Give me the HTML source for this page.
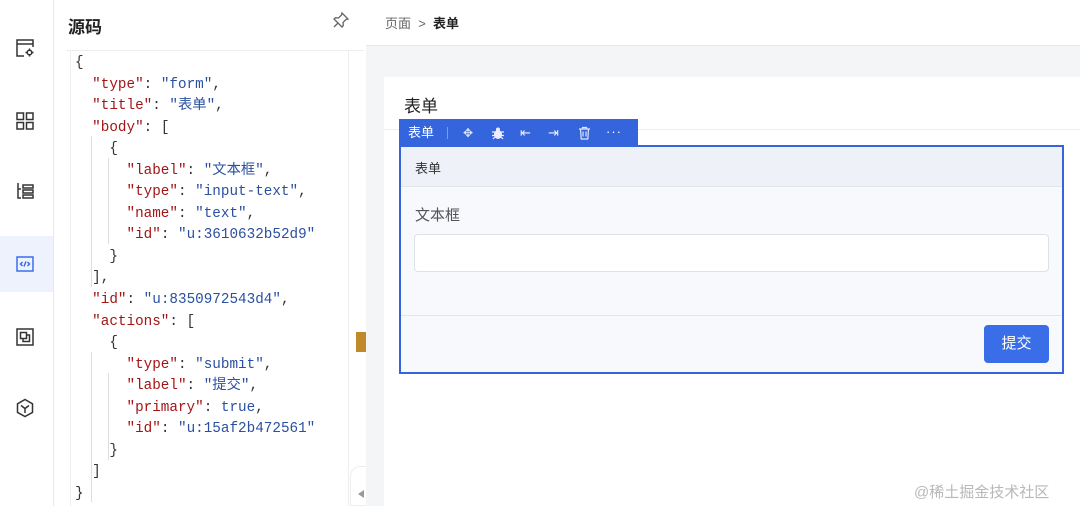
<!DOCTYPE html>
<html><head><meta charset="utf-8"><style>
*{margin:0;padding:0;box-sizing:border-box}
body{width:1080px;height:506px;overflow:hidden;background:#fff;font-family:"Liberation Sans","Noto Sans CJK SC",sans-serif;position:relative;color:#333}
.abs{position:absolute}
.side{left:0;top:0;width:54px;height:506px;border-right:1px solid #e8e8e8;background:#fff}
.ico{position:absolute;left:14px;width:22px;height:22px}
.panel{left:54px;top:0;width:312px;height:506px;background:#fff}
.code{position:absolute;left:70px;top:50px;width:293px;height:456px;border-left:1px solid #eee}
.txt{position:absolute;left:4px;top:3px;font-family:"Liberation Mono","Noto Sans CJK SC",monospace;font-size:14.3px;line-height:21.55px;color:#333;white-space:pre}
.k{color:#a31515}.s{color:#2a50a0}.b{color:#2a50a0}
.guide{position:absolute;border-left:1px solid #ddd}
</style></head><body>
<div class="abs side">
 <svg class="ico" style="top:37px" viewBox="0 0 22 22" fill="none" stroke="#333" stroke-width="1.5"><path d="M10 19H3V3h16v7"/><path d="M3 7h16"/><circle cx="15.5" cy="15.5" r="2.3"/><path d="M15.5 11.5v1.5M15.5 18v1.5M11.5 15.5h1.5M18 15.5h1.5"/></svg>
 <svg class="ico" style="top:110px" viewBox="0 0 22 22" fill="none" stroke="#333" stroke-width="1.5"><rect x="3" y="3" width="6.5" height="6.5"/><rect x="12.5" y="3" width="6.5" height="6.5"/><rect x="3" y="12.5" width="6.5" height="6.5"/><rect x="12.5" y="12.5" width="6.5" height="6.5"/></svg>
 <svg class="ico" style="top:180px" viewBox="0 0 22 22" fill="none" stroke="#333" stroke-width="1.5"><path d="M4 3v15h3M4 9h3"/><rect x="9" y="5" width="10" height="3"/><rect x="9" y="10" width="10" height="3"/><rect x="9" y="15" width="10" height="3"/></svg>
 <div class="abs" style="left:0;top:236px;width:53px;height:56px;background:#eef2fd"></div>
 <svg class="ico" style="top:253px" viewBox="0 0 22 22" fill="none" stroke="#3a6ee8" stroke-width="1.5"><rect x="3" y="4" width="16" height="14"/><path d="M8.5 9l-2 2 2 2M13.5 9l2 2-2 2M12 8.5l-2 5"/></svg>
 <svg class="ico" style="top:326px" viewBox="0 0 22 22" fill="none" stroke="#333" stroke-width="1.5"><rect x="3" y="3" width="16" height="16"/><rect x="6.5" y="6.5" width="6" height="6"/><path d="M9 12.5v3h6.5V9h-3"/></svg>
 <svg class="ico" style="top:397px" viewBox="0 0 22 22" fill="none" stroke="#333" stroke-width="1.5"><path d="M11 2.5l7.5 4.3v8.6L11 19.5 3.5 15.4V6.8z"/><path d="M7 8.5l4 3 4-3M11 11.5v4.5"/></svg>
</div>
<div class="abs panel">
 <div class="abs" style="left:14px;top:13px;font-size:17px;font-weight:bold;color:#222">源码</div>
 <svg class="abs" style="left:278px;top:11px" width="18" height="18" viewBox="0 0 18 18" fill="none" stroke="#666" stroke-width="1.3"><path d="M10 2l6 6-2 .5-3 3 .3 3L10 16 2 8l1.5-1.3 3 .3 3-3z"/><path d="M6 12l-4 4"/></svg>
 <div class="abs" style="left:12px;top:50px;width:298px;height:1px;background:#eee"></div>
 <div class="abs" style="left:294px;top:50px;width:1px;height:456px;background:#eee"></div>
 <div class="abs" style="left:302px;top:332px;width:10px;height:20px;background:#c08a2a"></div>
 <div class="abs" style="left:296px;top:466px;width:16px;height:40px;background:#fff;border-radius:10px 0 0 0;border:1px solid #eee;border-right:0"></div>
 <div class="abs" style="top:490px;width:0;height:0;border:4px solid transparent;border-right:6px solid #999;left:300px"></div>
</div>
<div class="code"><div class="guide" style="left:20px;top:86px;height:151px"></div><div class="guide" style="left:37px;top:108px;height:86px"></div><div class="guide" style="left:20px;top:302px;height:150px"></div><div class="guide" style="left:37px;top:323px;height:87px"></div><div class="txt">{
  <span class="k">"type"</span>: <span class="s">"form"</span>,
  <span class="k">"title"</span>: <span class="s">"表单"</span>,
  <span class="k">"body"</span>: [
    {
      <span class="k">"label"</span>: <span class="s">"文本框"</span>,
      <span class="k">"type"</span>: <span class="s">"input-text"</span>,
      <span class="k">"name"</span>: <span class="s">"text"</span>,
      <span class="k">"id"</span>: <span class="s">"u:3610632b52d9"</span>
    }
  ],
  <span class="k">"id"</span>: <span class="s">"u:8350972543d4"</span>,
  <span class="k">"actions"</span>: [
    {
      <span class="k">"type"</span>: <span class="s">"submit"</span>,
      <span class="k">"label"</span>: <span class="s">"提交"</span>,
      <span class="k">"primary"</span>: <span class="b">true</span>,
      <span class="k">"id"</span>: <span class="s">"u:15af2b472561"</span>
    }
  ]
}</div></div>
<div class="abs" style="left:366px;top:0;width:714px;height:506px;background:#f4f5f7"></div>
<div class="abs" style="left:366px;top:0;width:714px;height:46px;background:#fff;border-bottom:1px solid #e8e8e8"></div>
<div class="abs" style="left:385px;top:13px;font-size:13px;color:#666">页面 &nbsp;&gt;&nbsp; <b style="color:#222">表单</b></div>
<div class="abs" style="left:384px;top:77px;width:696px;height:429px;background:#fff"></div>
<div class="abs" style="left:404px;top:92px;font-size:17px;color:#222">表单</div>
<div class="abs" style="left:384px;top:129px;width:696px;height:1px;background:#eee"></div>
<div class="abs" style="left:399px;top:145px;width:665px;height:229px;border:2px solid #3565dc;background:#f7f9fd"></div>
<div class="abs" style="left:401px;top:147px;width:661px;height:40px;background:#eef1f7;border-bottom:1px solid #e1e5ec"></div>
<div class="abs" style="left:415px;top:158px;font-size:13px;color:#333">表单</div>
<div class="abs" style="left:415px;top:204px;font-size:15px;color:#555">文本框</div>
<div class="abs" style="left:414px;top:234px;width:635px;height:38px;background:#fff;border:1px solid #dde1e8;border-radius:4px"></div>
<div class="abs" style="left:401px;top:315px;width:661px;height:1px;background:#e1e5ec"></div>
<div class="abs" style="left:984px;top:325px;width:65px;height:38px;background:#3a6ee8;border-radius:4px;color:#fff;font-size:15px;text-align:center;line-height:38px">提交</div>
<div class="abs" style="left:399px;top:119px;width:239px;height:28px;background:#3565dc;color:#fff;font-size:13px;line-height:28px;padding-left:9px">表单
 <span style="position:absolute;left:48px;top:8px;width:1px;height:12px;background:#7d9ae8"></span>
 <span style="position:absolute;left:64px;top:0;font-size:12px;color:#dfe7fb">✥</span>
 <svg style="position:absolute;left:92px;top:7px" width="14" height="14" viewBox="0 0 14 14" fill="#eef"><ellipse cx="7" cy="8.5" rx="4" ry="4.5"/><circle cx="7" cy="3.5" r="2"/><path d="M1 6h12M1 9.5h12M2 13l2-2M12 13l-2-2" stroke="#eef" stroke-width="1.2"/></svg>
 <span style="position:absolute;left:121px;top:0;color:#eef">⇤</span>
 <span style="position:absolute;left:149px;top:0;color:#eef">⇥</span>
 <svg style="position:absolute;left:179px;top:7px" width="13" height="14" viewBox="0 0 13 14" fill="none" stroke="#dfe7fb" stroke-width="1.2"><path d="M1 3h11M4.5 3V1.5h4V3M2.5 3l.7 10h6.6l.7-10M5 5.5v5M8 5.5v5"/></svg>
 <span style="position:absolute;left:207px;top:-1px;letter-spacing:1px">···</span>
</div>
<div class="abs" style="left:914px;top:481px;font-size:15px;color:#b8b8b8">@稀土掘金技术社区</div>
</body></html>
